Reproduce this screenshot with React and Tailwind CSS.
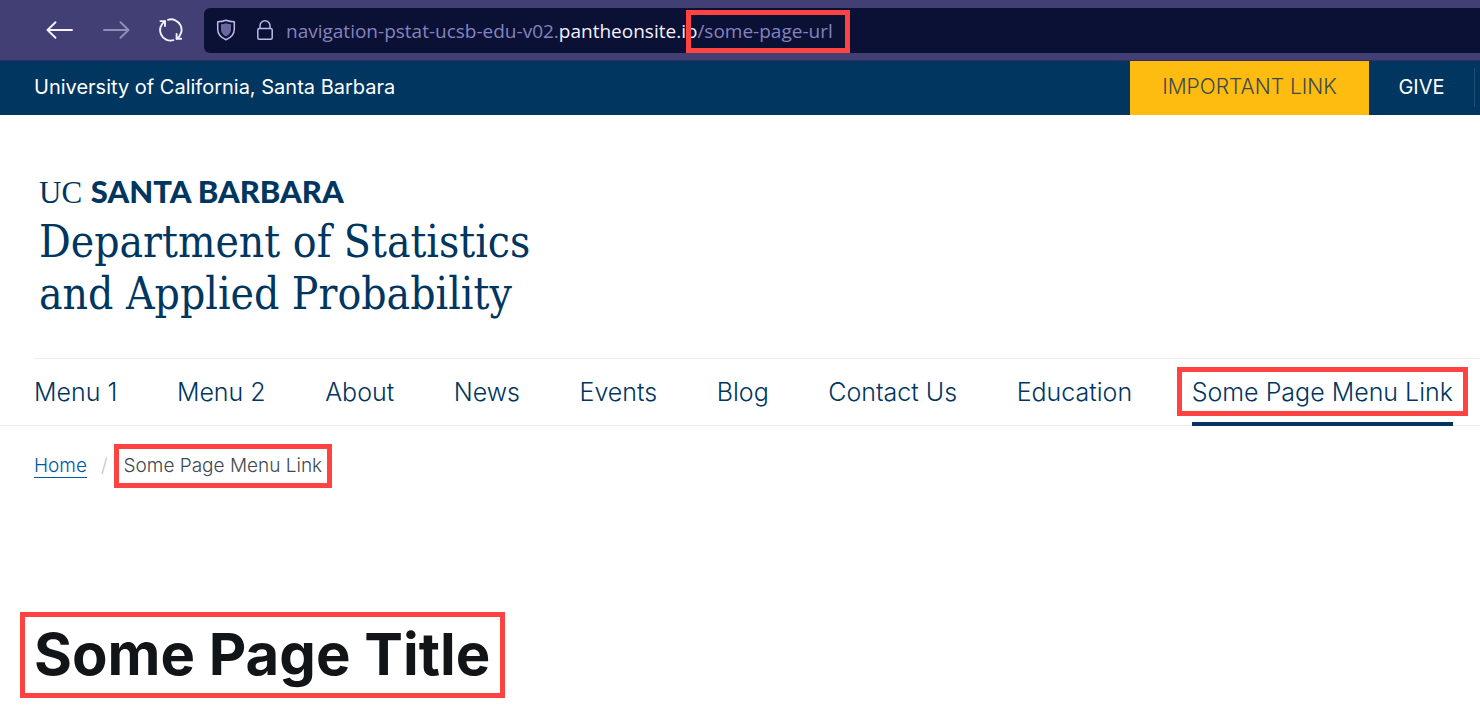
import React from "react";

const sans = "font-['Century_Gothic',Inter,sans-serif]";

const menu = ["Menu 1", "Menu 2", "About", "News", "Events", "Blog", "Contact Us", "Education"];

function Marker({ className }) {
  return (
    <span
      aria-hidden="true"
      className={"pointer-events-none absolute border-[5px] border-[#ff4242] " + className}
    />
  );
}

function ArrowIcon({ className }) {
  return (
    <svg width="28" height="20" viewBox="0 0 28 20" fill="none" stroke="currentColor" strokeWidth="1.9" strokeLinecap="round" strokeLinejoin="round" className={className}>
      <path d="M26 10H2M9.500 2.200L1.500 10l8 7.800" />
    </svg>
  );
}

function ReloadIcon() {
  return (
    <svg width="24" height="24" viewBox="0 0 24 24" fill="none" stroke="currentColor" strokeWidth="1.9" strokeLinecap="round" strokeLinejoin="round">
      <path d="M9 1.800A10.500 10.500 0 0 1 17.700 20.700" />
      <path d="M14.400 22.200A10.500 10.500 0 0 1 6 3.200" />
      <path d="M22.200 20.800H17.600V16" />
      <path d="M1.400 3.100H6V8" />
    </svg>
  );
}

function ShieldIcon() {
  return (
    <svg width="20" height="22" viewBox="0 0 20 22" fill="none">
      <path d="M10 1.200C7.200 2.300 4.300 2.700 1.700 2.700V10C1.700 15 5 18.600 10 20.700C15 18.600 18.300 15 18.300 10V2.700C15.700 2.700 12.800 2.300 10 1.200Z" stroke="#bdb9ea" strokeWidth="1.500" strokeLinejoin="round" />
      <path d="M10 4.300C8.500 4.900 6.700 5.200 5 5.300V10.500C5 13.600 6.900 16 10 17.500C13.100 16 15 13.600 15 10.500V5.300C13.300 5.200 11.500 4.900 10 4.300Z" fill="#6a679c" />
    </svg>
  );
}

function LockIcon() {
  return (
    <svg width="16" height="20" viewBox="0 0 16 20" fill="none" stroke="#bdb9ea" strokeWidth="1.500">
      <rect x="0.800" y="8.500" width="14.400" height="10.700" rx="1.500" />
      <path d="M3 8.500V5.800a5 5 0 0 1 10 0V8.500" />
    </svg>
  );
}

export default function App() {
  return (
    <div className={"min-h-screen overflow-x-hidden bg-white " + sans}>
      <div className="flex h-[61px] items-center border-b border-[#33305f] bg-[#423f75] pl-[46px] text-[#f4f2ff]">
        <button type="button" aria-label="Back" className="mr-7">
          <ArrowIcon />
        </button>
        <button type="button" aria-label="Forward" disabled className="mr-[29px] text-[#918fb5]">
          <ArrowIcon className="rotate-180" />
        </button>
        <button type="button" aria-label="Reload" className="mr-[21px]">
          <ReloadIcon />
        </button>
        <div className="flex h-[45px] flex-1 items-center rounded-l-md bg-[#0b1035] pl-3">
          <button type="button" aria-label="Tracking protection" className="mr-[21px]">
            <ShieldIcon />
          </button>
          <button type="button" aria-label="Site information" className="mr-[13px]">
            <LockIcon />
          </button>
          <div
            role="textbox"
            aria-label="Address"
            contentEditable
            suppressContentEditableWarning
            className="pt-0.5 font-['Segoe_UI','Open_Sans',sans-serif] text-[19px] leading-7 whitespace-nowrap text-[#8583bd] outline-none"
          >
            navigation-pstat-ucsb-edu-v02.
            <span className="text-[#f4f2ff]">pantheonsite.io</span>
            <span className="relative">
              /some-page-url
              <Marker className="-top-2 -right-[17px] -bottom-[9px] -left-[11px]" />
            </span>
          </div>
        </div>
      </div>

      <header>
        <div className="flex h-[54px] items-center bg-[#003660] pb-0.5 pl-[34px] text-white">
          <a href="#ucsb" className="mr-auto text-[20px]">
            University of California, Santa Barbara
          </a>
          <a href="#important" className="-mb-0.5 flex w-[239px] items-center justify-center self-stretch bg-[#febc11] pb-0.5 text-[21px] font-light text-[#3d4952]">
            IMPORTANT LINK
          </a>
          <a href="#give" className="flex h-[39px] w-[106px] items-center justify-center border-r border-[#1f4e74] text-[20px]">
            GIVE
          </a>
          <span className="w-[5px]" />
        </div>

        <a href="#home" className="flex w-fit flex-col gap-[5px] pt-[58px] pb-[38px] pl-[39px] whitespace-nowrap text-[#003660]">
          <span className="text-[31px] leading-9">
            <span className="font-['Liberation_Serif',serif]">UC</span>{" "}
            <span className="font-[Lato,sans-serif] font-black">SANTA BARBARA</span>
          </span>
          <span className="font-['DejaVu_Serif_Condensed','DejaVu_Serif',serif] text-[44px] leading-[52px]">
            Department of Statistics
            <br />
            and Applied Probability
          </span>
        </a>

        <nav aria-label="Main" className="border-b border-[#ececec]">
          <ul className="ml-[34px] flex h-[67px] justify-between border-t border-[#ececec] pr-[27px] text-[25px] font-light whitespace-nowrap text-[#003660]">
            {menu.map((item) => (
              <li key={item} className="flex items-center pt-0.5">
                <a href="#menu">{item}</a>
              </li>
            ))}
            <li className="relative -mb-px flex items-center border-b-4 border-[#003660] pt-[5px]">
              <a href="#some-page-url" aria-current="page">Some Page Menu Link</a>
              <Marker className="top-2 -right-[15px] -left-[15px] h-[49px]" />
            </li>
          </ul>
        </nav>
      </header>

      <main className="pl-[34px]">
        <nav aria-label="Breadcrumb" className="flex h-20 items-center text-[19px] leading-6 font-light">
          <a href="#home" className="border-b border-[#0057a8] leading-[22px] text-[#0057a8]">Home</a>
          <span className="mx-[14px] text-[#c4c4c4]">/</span>
          <span className="relative ml-0.5 text-[#3d4952]">
            Some Page Menu Link
            <Marker className="-inset-[10px]" />
          </span>
        </nav>
        <h1 className="relative mt-[110px] w-fit text-[58px] leading-[76px] font-bold whitespace-nowrap text-[#121518]">
          Some Page Title
          <Marker className="-top-1 -right-[15px] -bottom-[6px] -left-[14px]" />
        </h1>
      </main>
    </div>
  );
}
